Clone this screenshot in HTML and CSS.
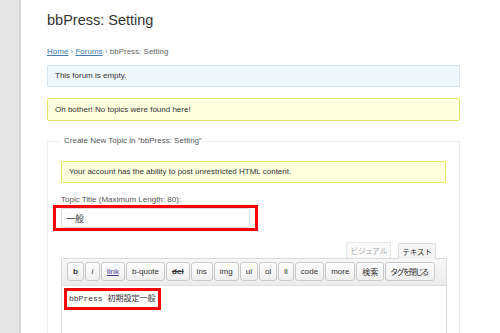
FILE: index.html
```html
<!DOCTYPE html>
<html lang="ja">
<head>
  <meta charset="UTF-8">
  <meta name="viewport" content="width=device-width, initial-scale=1.0">
  <title>bbPress: Setting</title>
  <link rel="stylesheet" href="styles.css">
</head>
<body>
  <div class="page">
    <!-- Admin sidebar strip -->
    <aside class="sidebar"></aside>

    <main class="content">
      <h1 class="title">bbPress: Setting</h1>

      <div class="breadcrumb">
        <a href="#">Home</a> <span class="sep">›</span> <a href="#">Forums</a> <span class="sep">›</span> <span class="current">bbPress: Setting</span>
      </div>

      <div class="notice info">This forum is empty.</div>
      <div class="notice alert">Oh bother! No topics were found here!</div>

      <!-- New Topic Form -->
      <fieldset class="new-topic">
        <legend>Create New Topic in “bbPress: Setting”</legend>

        <div class="notice alert inner">Your account has the ability to post unrestricted HTML content.</div>

        <label class="field-label" for="topicTitle">Topic Title (Maximum Length: 80):</label>
        <div class="title-field marked">
          <input type="text" class="title-input" id="topicTitle" value="一般">
        </div>

        <div class="editor-tabs">
          <span class="tab">ビジュアル</span>
          <span class="tab active">テキスト</span>
        </div>

        <div class="editor">
          <div class="toolbar">
            <span class="qt-button bold">b</span>
            <span class="qt-button italic">i</span>
            <span class="qt-button link">link</span>
            <span class="qt-button">b-quote</span>
            <span class="qt-button strike">del</span>
            <span class="qt-button">ins</span>
            <span class="qt-button">img</span>
            <span class="qt-button">ul</span>
            <span class="qt-button">ol</span>
            <span class="qt-button">li</span>
            <span class="qt-button">code</span>
            <span class="qt-button">more</span>
            <span class="qt-button">検索</span>
            <span class="qt-button kana">タグを閉じる</span>
          </div>
          <div class="editor-body">
            <span class="editor-text marked">bbPress 初期設定一般</span>
          </div>
        </div>
      </fieldset>
    </main>
  </div>
</body>
</html>
```

FILE: styles.css
```css
/* General Styles */
html, body {
  margin: 0;
  height: 100%;
  overflow: hidden;
  background: #fff;
}

body {
  font-family: "Liberation Sans", Arial, "Noto Sans CJK JP", sans-serif;
  font-size: 8px;
  color: #333;
}

.page {
  display: flex;
  height: 100%;
}

.sidebar {
  width: 19px;
  flex-shrink: 0;
  background-color: #e5e5e5;
  border-right: 2px solid #d5d5d5;
}

.content {
  width: 413px;
  padding: 11px 0 0 26px;
}

/* Heading */
.title {
  margin: 0;
  font-size: 14.5px;
  line-height: 18px;
  font-weight: normal;
  color: #333;
}

.breadcrumb {
  margin-top: 18px;
  line-height: 10px;
  color: #666;
}

.breadcrumb a {
  color: #3d7eb6;
}

.breadcrumb .sep {
  color: #888;
}

/* Notices */
.notice {
  padding: 0 7px;
  line-height: 20px;
  border: 1px solid;
  border-radius: 2px;
}

.notice.info {
  margin-top: 8px;
  background-color: #eff7fd;
  border-color: #d4e4f0;
}

.notice.alert {
  margin-top: 11px;
  line-height: 21px;
  background-color: #ffffe0;
  border-color: #e8e36b;
}

.notice.alert.inner {
  margin-top: 0;
  line-height: 20px;
}

/* New Topic Fieldset */
.new-topic {
  margin: 15px 0 0;
  padding: 15px 13px 0;
  border: 1px solid #ededed;
  border-bottom: none;
  min-width: 0;
}

.new-topic legend {
  padding: 0 3px;
  line-height: 10px;
  color: #555;
}

.field-label {
  display: block;
  margin-top: 12px;
  line-height: 10px;
  color: #555;
}

/* Red annotation boxes */
.marked {
  position: relative;
}

.marked::after {
  content: "";
  position: absolute;
  border: 3px solid #f00;
  pointer-events: none;
}

.title-field {
  width: 189px;
  margin-top: 3px;
}

.title-field::after {
  top: -3px;
  bottom: -3px;
  left: -8px;
  right: -8px;
}

.title-input {
  display: block;
  box-sizing: border-box;
  width: 100%;
  height: 20px;
  padding: 0 4px;
  border: 1px solid #dcdcdc;
  border-radius: 2px;
  font-family: "Noto Sans CJK JP", sans-serif;
  font-size: 9px;
  color: #333;
  outline: none;
}

/* Editor Tabs */
.editor-tabs {
  display: flex;
  justify-content: flex-end;
  gap: 7px;
  margin-top: 14px;
  padding-right: 11px;
  width: 386px;
  box-sizing: border-box;
}

.tab {
  height: 15px;
  line-height: 15px;
  padding: 0 3px;
  border: 1px solid #e8e8e8;
  border-bottom: none;
  border-radius: 2px 2px 0 0;
  font-family: "Noto Sans CJK JP", sans-serif;
  font-size: 7.5px;
  color: #aaa;
  background-color: #fafafa;
}

.tab.active {
  color: #333;
  background-color: #f4f4f4;
  border-color: #dcdcdc;
  position: relative;
  top: 1px;
}

/* Editor */
.editor {
  width: 386px;
  height: 76px;
  box-sizing: border-box;
  border: 1px solid #dcdcdc;
  border-bottom: none;
  overflow: hidden;
}

.toolbar {
  display: flex;
  gap: 1px;
  padding: 3px 5px 4px;
  background: linear-gradient(#f7f7f7, #ececec);
  border-bottom: 1px solid #dedede;
}

.qt-button {
  display: flex;
  flex-shrink: 0;
  align-items: center;
  justify-content: center;
  box-sizing: border-box;
  min-width: 15px;
  height: 19px;
  padding: 0 5px;
  border: 1px solid #c9c9c9;
  border-radius: 3px;
  background: linear-gradient(#fefefe, #efefef);
  font-family: "Liberation Sans", Arial, "Noto Sans CJK JP", sans-serif;
  font-size: 8px;
  white-space: nowrap;
  color: #333;
}

.qt-button.kana {
  letter-spacing: -1.8px;
  padding: 0 6px 0 4px;
}

.qt-button.bold {
  font-weight: bold;
}

.qt-button.italic {
  font-style: italic;
}

.qt-button.link {
  color: #4a3d8f;
  text-decoration: underline;
}

.qt-button.strike {
  font-weight: bold;
  text-decoration: line-through;
}

.editor-body {
  padding: 7px 7px;
  background: #fff;
}

.editor-text {
  display: inline-block;
  font-family: "Liberation Mono", "Noto Sans CJK JP", monospace;
  font-size: 8px;
  line-height: 12px;
  color: #333;
}

.editor-text::after {
  top: -5px;
  bottom: -5px;
  left: -5px;
  right: -6px;
}
```
